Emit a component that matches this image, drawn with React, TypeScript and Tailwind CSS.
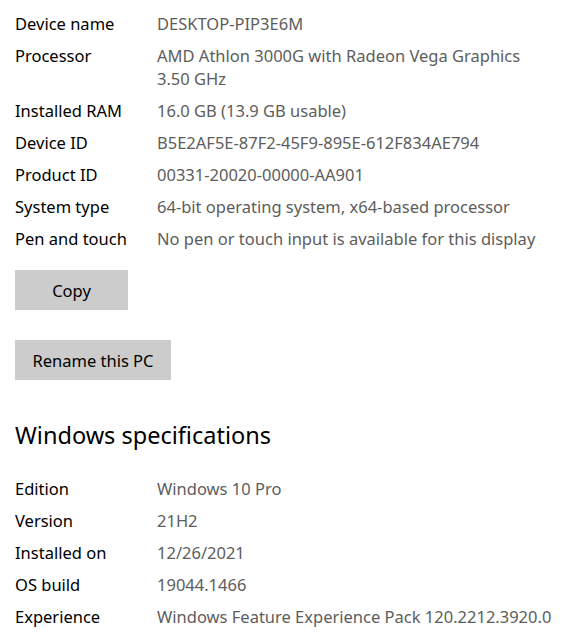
import React from 'react';

interface SpecRow {
  label: string;
  value: React.ReactNode;
}

const deviceSpecs: SpecRow[] = [
  { label: 'Device name', value: 'DESKTOP-PIP3E6M' },
  {
    label: 'Processor',
    value: (
      <>
        AMD Athlon 3000G with Radeon Vega Graphics
        <br />
        3.50 GHz
      </>
    ),
  },
  { label: 'Installed RAM', value: '16.0 GB (13.9 GB usable)' },
  { label: 'Device ID', value: 'B5E2AF5E-87F2-45F9-895E-612F834AE794' },
  { label: 'Product ID', value: '00331-20020-00000-AA901' },
  { label: 'System type', value: '64-bit operating system, x64-based processor' },
  { label: 'Pen and touch', value: 'No pen or touch input is available for this display' },
];

const windowsSpecs: SpecRow[] = [
  { label: 'Edition', value: 'Windows 10 Pro' },
  { label: 'Version', value: '21H2' },
  { label: 'Installed on', value: '12/26/2021' },
  { label: 'OS build', value: '19044.1466' },
  { label: 'Experience', value: 'Windows Feature Experience Pack 120.2212.3920.0' },
];

const SpecList: React.FC<{ rows: SpecRow[] }> = ({ rows }) => (
  <div className="flex flex-col gap-[9px]">
    {rows.map((row) => (
      <div key={row.label} className="flex leading-[23px]">
        <div className="w-[142px] shrink-0 text-black">{row.label}</div>
        <div className="text-[#5d5d5d]">{row.value}</div>
      </div>
    ))}
  </div>
);

export default function App() {
  return (
    <div
      className="min-h-screen bg-white px-[15px] pt-[12px] text-[16.5px]"
      style={{ fontFamily: '"Segoe UI", "Noto Sans", sans-serif' }}
    >
      <SpecList rows={deviceSpecs} />

      <div className="mt-[20px] flex flex-col items-start gap-[30px]">
        <button className="h-[40px] w-[113px] bg-[#cccccc] pt-[2px] text-black">Copy</button>
        <button className="h-[40px] w-[156px] bg-[#cccccc] pt-[2px] text-black">Rename this PC</button>
      </div>

      <h2 className="mt-[38px] text-[23.5px] leading-[34px] text-black">Windows specifications</h2>

      <div className="mt-[25px]">
        <SpecList rows={windowsSpecs} />
      </div>
    </div>
  );
}
